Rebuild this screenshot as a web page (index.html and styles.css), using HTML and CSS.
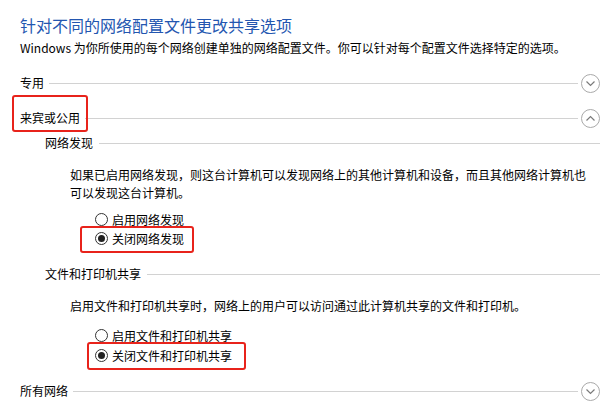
FILE: index.html
```html
<html>
<head>
    <title>高级共享设置</title>
    <link rel="stylesheet" href="styles.css">
</head>
<body>
    <h1 class="title">针对不同的网络配置文件更改共享选项</h1>
    <p class="intro">Windows 为你所使用的每个网络创建单独的网络配置文件。你可以针对每个配置文件选择特定的选项。</p>

    <!-- 专用 -->
    <div class="profile first">
        <span class="profile-name">专用</span>
        <span class="rule"></span>
        <span class="toggle">
            <svg width="19" height="19" viewBox="0 0 19 19"><circle cx="9.5" cy="9.5" r="9" fill="none" stroke="#a9a9a9"/><path d="M5.5 7.5 L9.5 11.5 L13.5 7.5" fill="none" stroke="#7a7a7a" stroke-width="1.2"/></svg>
        </span>
    </div>

    <!-- 来宾或公用 (expanded) -->
    <div class="profile">
        <span class="profile-name mark mark-profile">来宾或公用</span>
        <span class="rule"></span>
        <span class="toggle">
            <svg width="19" height="19" viewBox="0 0 19 19"><circle cx="9.5" cy="9.5" r="9" fill="none" stroke="#a9a9a9"/><path d="M5.5 11.5 L9.5 7.5 L13.5 11.5" fill="none" stroke="#7a7a7a" stroke-width="1.2"/></svg>
        </span>
    </div>

    <div class="group first-group">
        <span class="group-name">网络发现</span>
        <span class="rule"></span>
    </div>
    <p class="desc">如果已启用网络发现，则这台计算机可以发现网络上的其他计算机和设备，而且其他网络计算机也可以发现这台计算机。</p>
    <div class="options">
        <label class="option"><span class="radio"></span>启用网络发现</label>
        <label class="option"><span class="mark mark-discovery"><span class="radio checked"></span>关闭网络发现</span></label>
    </div>

    <div class="group">
        <span class="group-name">文件和打印机共享</span>
        <span class="rule"></span>
    </div>
    <p class="desc">启用文件和打印机共享时，网络上的用户可以访问通过此计算机共享的文件和打印机。</p>
    <div class="options options-sharing">
        <label class="option"><span class="radio"></span>启用文件和打印机共享</label>
        <label class="option"><span class="mark mark-sharing"><span class="radio checked"></span>关闭文件和打印机共享</span></label>
    </div>

    <!-- 所有网络 -->
    <div class="profile last">
        <span class="profile-name">所有网络</span>
        <span class="rule"></span>
        <span class="toggle">
            <svg width="19" height="19" viewBox="0 0 19 19"><circle cx="9.5" cy="9.5" r="9" fill="none" stroke="#a9a9a9"/><path d="M5.5 7.5 L9.5 11.5 L13.5 7.5" fill="none" stroke="#7a7a7a" stroke-width="1.2"/></svg>
        </span>
    </div>
</body>
</html>
```

FILE: styles.css
```css
body {
    margin: 0;
    padding: 14px 12px 0 20px;
    background: #ffffff;
    color: #000000;
    font-family: "Microsoft YaHei", "Noto Sans CJK SC", "Noto Sans", sans-serif;
    font-size: 12px;
    line-height: 18px;
    overflow: hidden;
}

.title {
    margin: 0;
    font-size: 16px;
    font-weight: normal;
    line-height: 22px;
    color: #2356b0; /* control panel heading blue */
}

.intro {
    margin: 3px 0 0 0;
}

/* collapsible profile header */
.profile {
    display: flex;
    align-items: center;
    height: 20px;
    margin-top: 15px;
}

.profile.first {
    margin-top: 16px;
}

.profile.last {
    margin-top: 16px;
}

.profile-name {
    margin-right: 5px;
    white-space: nowrap;
}

.rule {
    flex: 1;
    height: 0;
    border-top: 1px solid #d2d2d2;
}

.toggle {
    display: flex;
    margin-left: 3px;
}

/* sub section header inside a profile */
.group {
    display: flex;
    align-items: center;
    height: 18px;
    margin-top: 17px;
    padding-left: 25px;
}

.group.first-group {
    margin-top: 6px;
}

.group-name {
    margin-right: 6px;
    white-space: nowrap;
}

.desc {
    margin: 14px 0 0 50px;
    max-width: 522px;
}

.options {
    display: flex;
    flex-direction: column;
    margin-top: 8px;
    padding-left: 75px;
}

.options-sharing {
    margin-top: 11px;
}

.option {
    display: flex;
    align-items: center;
    height: 19px;
    white-space: nowrap;
}

.options-sharing .option + .option {
    margin-top: 1px;
}

.option > .mark {
    display: flex;
    align-items: center;
}

.radio {
    box-sizing: border-box;
    width: 13px;
    height: 13px;
    margin-right: 4px;
    border: 1px solid #333333;
    border-radius: 50%;
    background: #ffffff;
    position: relative;
}

.radio.checked::after {
    content: "";
    position: absolute;
    left: 2px;
    top: 2px;
    width: 7px;
    height: 7px;
    border-radius: 50%;
    background: #222222;
}

/* red annotation boxes */
.mark {
    position: relative;
}

.mark::after {
    content: "";
    position: absolute;
    border: 2px solid #e8231b;
    border-radius: 3px;
}

.mark-profile::after {
    left: -8px;
    right: -8px;
    top: -14px;
    bottom: -5px;
}

.mark-discovery::after {
    left: -15px;
    right: -10px;
    top: -4px;
    bottom: -5px;
}

.mark-sharing::after {
    left: -8px;
    right: -14px;
    top: -5px;
    bottom: -5px;
}
```
